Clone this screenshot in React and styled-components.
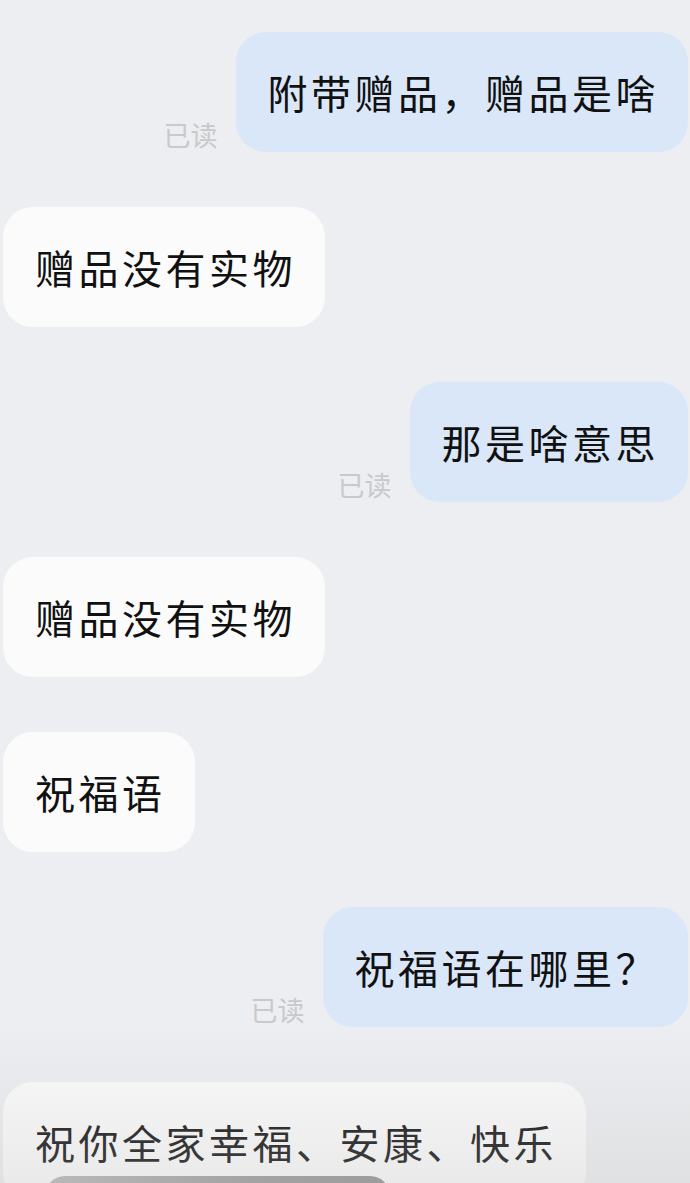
import React from "react";
import styled, { createGlobalStyle } from "styled-components";

const GlobalStyle = createGlobalStyle`
  html, body {
    margin: 0;
    padding: 0;
    background: #eceef1;
    overflow: hidden;
  }
  body {
    font-family: "Noto Sans CJK SC", "Noto Sans", sans-serif;
  }
`;

const StyledChat = styled.div`
  position: relative;
  display: flex;
  flex-direction: column;
  gap: 55px;
  width: 690px;
  height: 1183px;
  box-sizing: border-box;
  padding: 32px 2px 0 3px;
  overflow: hidden;
  background: #eceef1;
`;

const StyledRow = styled.div`
  display: flex;
  align-items: flex-end;
  justify-content: ${(p) => (p.$mine ? "flex-end" : "flex-start")};
  gap: 18px;
`;

const StyledBubble = styled.div`
  box-sizing: border-box;
  height: 120px;
  padding: 40px 29px 40px 32px;
  border-radius: 30px;
  background: ${(p) => (p.$mine ? "#d9e7f9" : "#fbfbfb")};
  color: #111;
  font-size: 40px;
  line-height: 40px;
  letter-spacing: 3.5px;
  white-space: nowrap;
`;

const StyledRead = styled.span`
  font-size: 27px;
  line-height: 30px;
  color: #c8c9cc;
  margin-bottom: 2px;
`;

const StyledFade = styled.div`
  position: absolute;
  left: 0;
  right: 0;
  bottom: 0;
  height: 160px;
  background: linear-gradient(
    to bottom,
    rgba(200, 200, 200, 0) 0%,
    rgba(190, 190, 190, 0.28) 100%
  );
  pointer-events: none;
`;

const StyledToast = styled.div`
  position: absolute;
  left: 45px;
  top: 1176px;
  width: 345px;
  height: 40px;
  border-radius: 24px;
  background: linear-gradient(to right, #b9b9b9, #a3a3a3 60%, #9c9c9c);
`;

const messages = [
  { text: "附带赠品，赠品是啥", mine: true, read: true },
  { text: "赠品没有实物" },
  { text: "那是啥意思", mine: true, read: true },
  { text: "赠品没有实物" },
  { text: "祝福语" },
  { text: "祝福语在哪里？", mine: true, read: true },
  { text: "祝你全家幸福、安康、快乐" },
];

const App = () => {
  return (
    <>
      <GlobalStyle />
      <StyledChat>
        {messages.map((m, i) => (
          <StyledRow key={i} $mine={m.mine}>
            {m.read && <StyledRead>已读</StyledRead>}
            <StyledBubble $mine={m.mine}>{m.text}</StyledBubble>
          </StyledRow>
        ))}
        <StyledFade />
        <StyledToast />
      </StyledChat>
    </>
  );
};

export default App;
